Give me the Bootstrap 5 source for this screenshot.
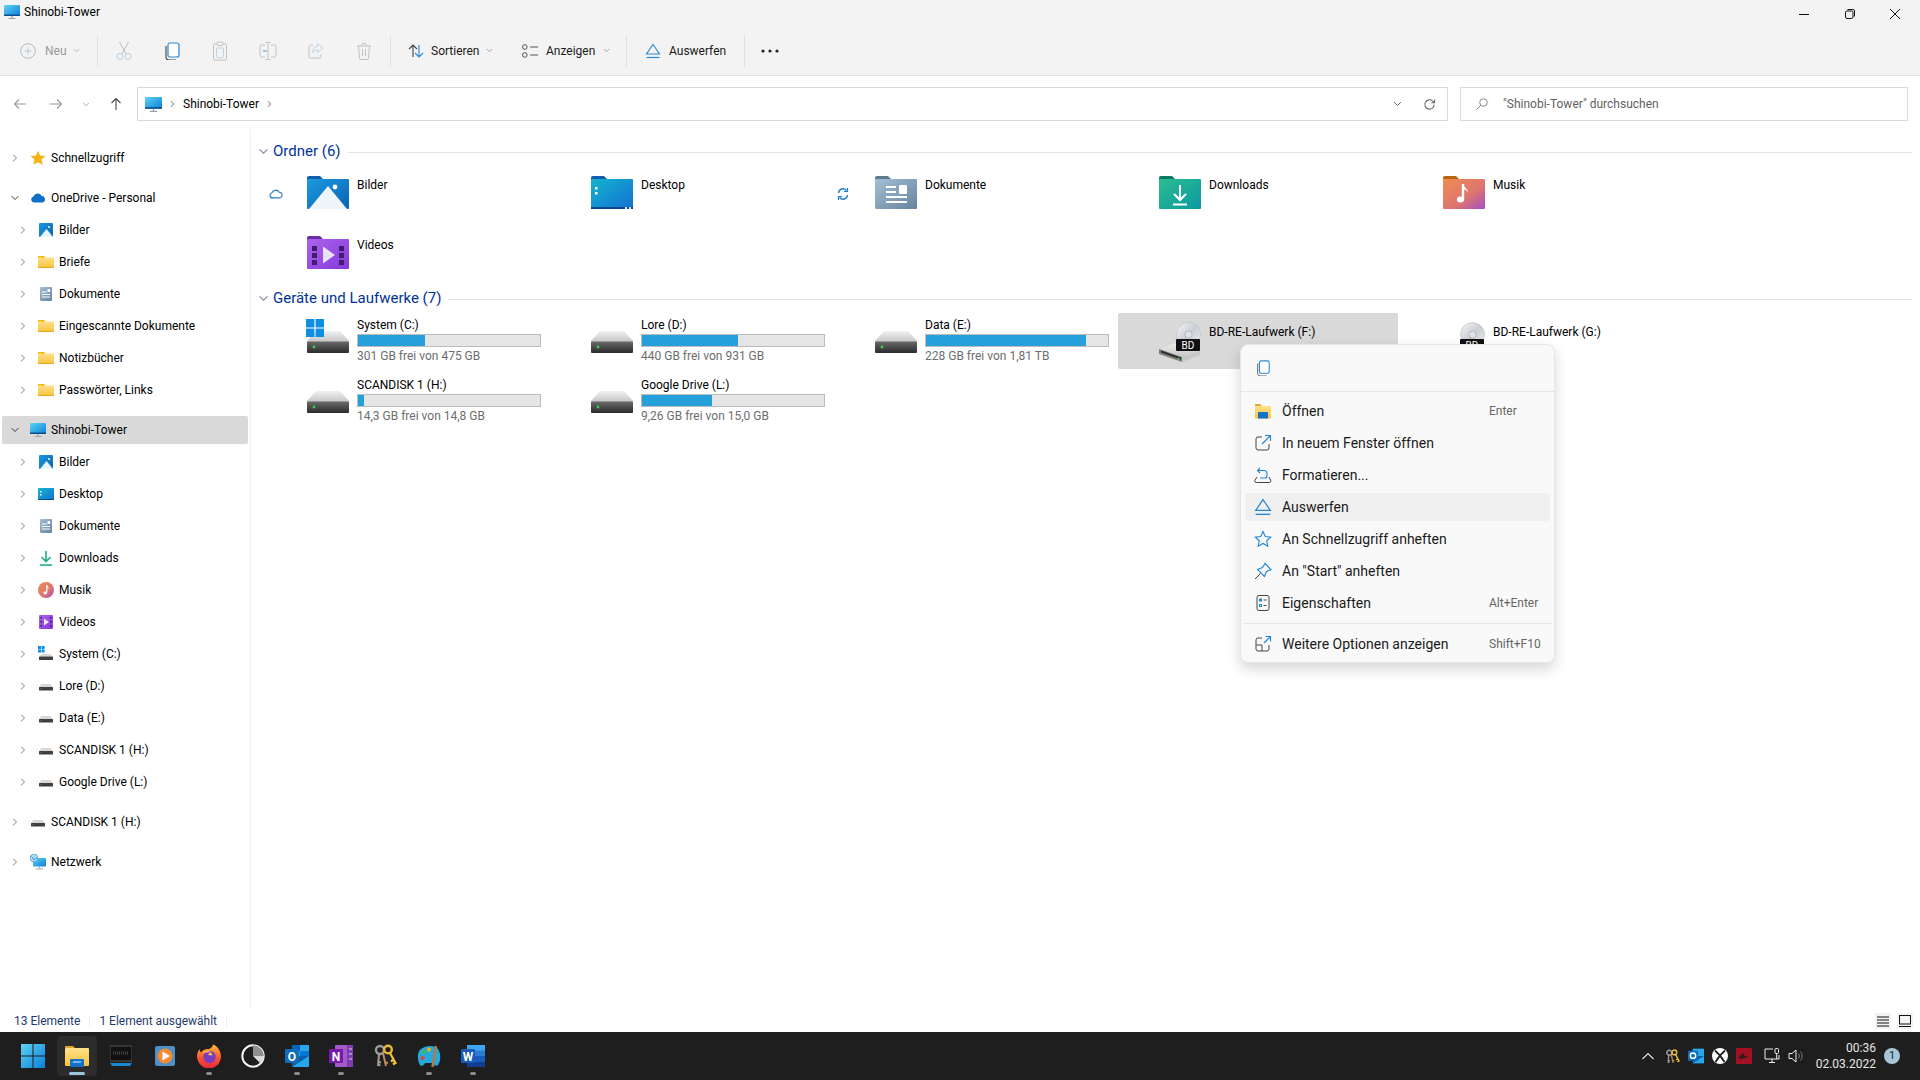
<!DOCTYPE html>
<html lang="de">
<head>
  <meta charset="UTF-8">
  <title>Shinobi-Tower</title>
  <link href="https://cdn.jsdelivr.net/npm/bootstrap@5.3.0/dist/css/bootstrap.min.css" rel="stylesheet">
  <style>
    html, body { height: 100%; }
    body {
      width: 1920px; height: 1080px; overflow: hidden; background: #fff; color: #000;
      font-family: Roboto, "Noto Sans", "Liberation Sans", sans-serif; font-size: 12px; line-height: 16px;
      display: flex; flex-direction: column;
    }
    .svg-defs { position: absolute; width: 0; height: 0; }
    svg { flex: none; display: block; }

    .win-title { height: 32px; background: #f3f3f3; flex: none; padding-right: 2px; }
    .win-title .name { margin-left: 4px; }
    .win-ctl { width: 45.500px; height: 28px; }
    .cmdbar { height: 44px; background: #f3f3f3; border-bottom: 1px solid #e3e3e3; padding-bottom: 6px; flex: none; }
    .cmd-sep { width: 1px; height: 32px; background: #e2e2e2; flex: none; }
    .cmd { height: 32px; border: 0; border-radius: 4px; padding: 0; color: #1a1a1a; font-size: 12px; display: flex; align-items: center; flex: none; }
    .cmd.neu { width: 97px; padding-left: 20px; color: #9a9a9a; gap: 9px; }
    .cmd.neu .chev-d { margin-left: -3px; color: #a8a8a8; }
    .edit-btns { margin-left: 2px; margin-right: 2px; }
    .cmd.ico { width: 48px; justify-content: center; }
    .cmd.sort { width: 114px; margin-left: 9px; padding-left: 8px; gap: 7px; }
    .cmd.view { width: 112px; padding-left: 8px; gap: 8px; }
    .cmd.eject { width: 117px; padding-left: 18px; gap: 8px; }
    .cmd.more { width: 50px; padding-left: 16px; }
    .chev-d { color: #8a8a8a; }

    .addr-row { height: 54px; padding: 11px 12px 9px 0; flex: none; }
    .nav-btns { width: 137px; padding-left: 6px; flex: none; }
    .nav-btn { width: 28px; height: 28px; }
    .nav-hist { margin: 0 12px; color: #9a9a9a; }
    .addr, .search { height: 34px; border: 1px solid #d9d9d9; background: #fff; }
    .addr { flex: 1; padding: 0 11px 0 7px; margin-right: 12px; }
    .addr .crumb { color: #555; }
    .addr .drop { color: #666; }
    .addr .refresh { margin-left: 21px; }
    .search { width: 448px; padding-left: 15px; color: #5f5f5f; gap: 15px; }

    .main { height: 880px; flex: none; }
    .tree { width: 251px; flex: none; border-right: 1px solid #f0f0f0; padding-top: 12px; }
    .tree-group { margin-bottom: 8px; display: flex; flex-direction: column; }
    .tree-row { height: 28px; margin: 2px; border-radius: 2px; flex: none; }
    .tree-row.sel { background: #d9d9d9; }
    .tree-row.l0 { padding-left: 6px; }
    .tree-row.l1 { padding-left: 14px; }
    .tree-row .exp { width: 14px; flex: none; display: flex; justify-content: center; color: #7d7d7d; }
    .tree-row .exp.open { color: #333; }
    .tree-row .ti { margin-left: 8px; margin-right: 5px; }

    .content { flex: 1; padding: 6px 8px 0 15px; }
    .grp-head { height: 30px; color: #003399; font-size: 15px; gap: 4px; margin-left: -8px; }
    .grp-head > svg { color: #7d8ba0; }
    .grp-head .rule { flex: 1; height: 1px; background: #e5e5e5; margin-left: 3px; margin-top: 2px; }
    .tiles { display: grid; grid-template-columns: repeat(5, 280px); grid-auto-rows: 56px; gap: 4px; }
    .tiles + .grp-head { margin-top: 1px; }
    .tile { border-radius: 2px; overflow: hidden; }
    .tile.sel { background: #d9d9d9; }
    .tile .state { width: 37px; flex: none; padding-left: 3px; }
    .tile .meta { margin-left: 6px; margin-top: -1px; width: 186px; }
    .tile .two { height: 32px; margin-top: -2px; }
    .progress.drive { height: 13px; width: 184px; margin: 1px 0; border: 1px solid #bcbcbc; background: #e6e6e6; border-radius: 0; }
    .progress.drive .progress-bar { background: #26a0da; }
    .sub { color: #6d6d6d; }

    .statusbar { height: 22px; color: #1d3a6b; padding: 0 7px 0 14px; flex: none; }
    .statusbar .tick { width: 1px; height: 12px; background: #eee; margin: 0 9px; }
    .view-btn { width: 16px; height: 16px; margin-left: 6px; background: #f3f3f3; }

    .taskbar { height: 48px; background: #1e1e1e; padding-left: 11px; color: #e6e6e6; flex: none; }
    .tb { width: 44px; height: 48px; position: relative; display: flex; align-items: center; justify-content: center; flex: none; }
    .tb.open::before { content: ""; position: absolute; left: 2px; right: 2px; top: 4px; bottom: 4px; background: #2c2c2c; border-radius: 4px; }
    .tb svg { position: relative; }
    .tb.run::after { content: ""; position: absolute; left: 19px; width: 6px; height: 3px; top: 40px; border-radius: 2px; background: #8a8a8a; }
    .tb.open::after { content: ""; position: absolute; left: 14px; width: 16px; height: 3px; top: 40px; border-radius: 2px; background: #9cc3dc; }
    .tray { width: 24px; height: 48px; flex: none; }
    .clock { width: 68px; text-align: right; color: #e6e6e6; flex: none; }
    .badge-note { width: 16px; height: 16px; margin: 0 20px 0 8px; border-radius: 50%; background: #a5c6d8; color: #1e1e1e; font-size: 11px; line-height: 16px; text-align: center; flex: none; }

    .dropdown-menu.ctx {
      left: 1240px; top: 344px; width: 315px; height: 319px; padding: 0; border: 1px solid #e6e6e6; border-radius: 8px;
      background: #f9f9f9; box-shadow: 0 6px 14px rgba(0,0,0,.16); font-size: 14px; line-height: 18px;
    }
    .ctx .top { height: 47px; padding-left: 14px; border-bottom: 1px solid #e5e5e5; }
    .ctx .rows { padding: 3px 0; display: flex; flex-direction: column; }
    .ctx .dropdown-item { height: 28px; margin: 2px 4px; width: auto; padding: 0 6px 0 9px; border-radius: 4px; color: #1a1a1a; display: flex; align-items: center; gap: 10px; background: transparent; flex: none; }
    .ctx .dropdown-item.hover { background: #f0f0f0; }
    .ctx .keys { margin-left: auto; width: 55px; font-size: 12px; color: #666; white-space: nowrap; }
    .ctx .dropdown-divider { margin: 4px 2px; border-top: 1px solid #e5e5e5; opacity: 1; height: 0; flex: none; }
  </style>
</head>
<body>

<svg class="svg-defs" xmlns="http://www.w3.org/2000/svg">
  <defs>
    <linearGradient id="gBlue" x1="0" y1="0" x2="1" y2="1"><stop offset="0" stop-color="#1c9ae0"/><stop offset="1" stop-color="#0a62b4"/></linearGradient>
    <linearGradient id="gCyan" x1="0" y1="0" x2="1" y2="1"><stop offset="0" stop-color="#14b4cf"/><stop offset="1" stop-color="#1470d2"/></linearGradient>
    <linearGradient id="gDocs" x1="0" y1="0" x2="1" y2="1"><stop offset="0" stop-color="#a3bed4"/><stop offset="1" stop-color="#67849f"/></linearGradient>
    <linearGradient id="gTeal" x1="0" y1="0" x2="1" y2="1"><stop offset="0" stop-color="#2cbd8f"/><stop offset="1" stop-color="#0b98a2"/></linearGradient>
    <linearGradient id="gMusic" x1="0" y1="0" x2="1" y2="1"><stop offset="0" stop-color="#f08c52"/><stop offset=".6" stop-color="#dc7570"/><stop offset="1" stop-color="#a44fc8"/></linearGradient>
    <linearGradient id="gVideo" x1="0" y1="0" x2="1" y2="1"><stop offset="0" stop-color="#ab63ea"/><stop offset="1" stop-color="#8638dc"/></linearGradient>
    <linearGradient id="gHddTop" x1="0" y1="0" x2="0" y2="1"><stop offset="0" stop-color="#f2f2f2"/><stop offset="1" stop-color="#c4c4c4"/></linearGradient>
    <linearGradient id="gHddBody" x1="0" y1="0" x2="0" y2="1"><stop offset="0" stop-color="#6a6a6a"/><stop offset="1" stop-color="#2b2b2b"/></linearGradient>
    <linearGradient id="gFolder" x1="0" y1="0" x2="0" y2="1"><stop offset="0" stop-color="#ffe08a"/><stop offset="1" stop-color="#fbc23c"/></linearGradient>
    <linearGradient id="gSky" x1="0" y1="0" x2="1" y2="1"><stop offset="0" stop-color="#5fd3f3"/><stop offset="1" stop-color="#0a7fd8"/></linearGradient>
    <linearGradient id="gDisc" x1="0" y1="0" x2="1" y2="1"><stop offset="0" stop-color="#f7f7f7"/><stop offset=".5" stop-color="#c9ced4"/><stop offset="1" stop-color="#eef0f2"/></linearGradient>
    <linearGradient id="gFox" x1="0" y1="0" x2="0" y2="1"><stop offset="0" stop-color="#ffbd3a"/><stop offset=".55" stop-color="#f6582c"/><stop offset="1" stop-color="#e8283f"/></linearGradient>
  </defs>

  <symbol id="f-pics" viewBox="0 0 48 48">
    <path d="M4 8a2 2 0 0 1 2-2h11l4 4h-17z" fill="#0f5fae"/><rect x="4" y="9" width="42" height="30" rx="1" fill="url(#gBlue)"/>
    <path d="M6 39 25 16 44 39z" fill="#eef6fb"/><circle cx="32" cy="17" r="2.400" fill="#fff"/>
  </symbol>
  <symbol id="f-desk" viewBox="0 0 48 48">
    <path d="M4 8a2 2 0 0 1 2-2h11l4 4h-17z" fill="#0f5fae"/><rect x="4" y="9" width="42" height="30" rx="1" fill="url(#gCyan)"/>
    <rect x="4" y="37" width="42" height="2" fill="#0a4a8c"/><rect x="8" y="17" width="2.500" height="2.500" fill="#fff"/><rect x="8" y="22" width="2.500" height="2.500" fill="#fff"/><rect x="38" y="37" width="2" height="2" fill="#cfe8f5"/><rect x="42" y="37" width="2" height="2" fill="#cfe8f5"/>
  </symbol>
  <symbol id="f-docs" viewBox="0 0 48 48">
    <path d="M4 8a2 2 0 0 1 2-2h11l4 4h-17z" fill="#5e7a90"/><rect x="4" y="9" width="42" height="30" rx="1" fill="url(#gDocs)"/>
    <path d="M15 17h10M15 22h10M15 27h21M15 32h21" stroke="#fff" stroke-width="2"/><rect x="28" y="15" width="8" height="9" rx="1" fill="#fff"/>
  </symbol>
  <symbol id="f-down" viewBox="0 0 48 48">
    <path d="M4 8a2 2 0 0 1 2-2h11l4 4h-17z" fill="#0a7a66"/><rect x="4" y="9" width="42" height="30" rx="1" fill="url(#gTeal)"/>
    <path d="M25 15v15M19 24l6 6 6-6" fill="none" stroke="#fff" stroke-width="2"/><path d="M18 34.500h14" stroke="#fff" stroke-width="2"/>
  </symbol>
  <symbol id="f-music" viewBox="0 0 48 48">
    <path d="M4 8a2 2 0 0 1 2-2h11l4 4h-17z" fill="#b8650f"/><rect x="4" y="9" width="42" height="30" rx="1" fill="url(#gMusic)"/>
    <path d="M24 14v15" stroke="#fff" stroke-width="2.400"/><ellipse cx="21.500" cy="29.500" rx="3.600" ry="3" fill="#fff"/><path d="M24 14c1 4 5 4 5 9-1-3-3-3.500-5-4z" fill="#fff"/>
  </symbol>
  <symbol id="f-video" viewBox="0 0 48 48">
    <path d="M4 8a2 2 0 0 1 2-2h11l4 4h-17z" fill="#6d2fa8"/><rect x="4" y="9" width="42" height="30" rx="1" fill="url(#gVideo)"/>
    <path d="M9 16h5v5H9zM9 23h5v5H9zM9 30h5v5H9zM36 16h5v5h-5zM36 23h5v5h-5zM36 30h5v5h-5z" fill="#3d1d6e"/><path d="M20 16.500 32 25 20 33.500z" fill="#e9e2f6"/>
  </symbol>
  <symbol id="hdd" viewBox="0 0 48 48">
    <path d="M13 14h24l9 10v1H4v-1z" fill="url(#gHddTop)"/><rect x="4" y="24.500" width="42" height="11.500" rx="1" fill="url(#gHddBody)"/><circle cx="11" cy="30" r="1.400" fill="#3ecb50"/>
  </symbol>
  <symbol id="winlogo" viewBox="0 0 48 48">
    <path d="M3 2h8.400v8.400H3zM12.600 2H21v8.400h-8.400zM3 11.600h8.400V20H3zM12.600 11.600H21V20h-8.400z" fill="#0f8fe3"/>
  </symbol>
  <symbol id="bd" viewBox="0 0 48 48">
    <circle cx="33.500" cy="17.500" r="12" fill="url(#gDisc)" stroke="#b9bec4" stroke-width=".6"/><circle cx="33.500" cy="17.500" r="3.600" fill="#dfe2e6" stroke="#9aa0a6" stroke-width=".6"/>
    <path d="M4 32 24 25 45 34 27 40z" fill="url(#gHddTop)"/><path d="M4 32 27 40V45L4 37z" fill="#7d7d7d"/><path d="M6 33.500 26 40.500V42.500L6 35.500z" fill="#2b2b2b"/><path d="M27 40 45 34V38L27 45z" fill="#c6c6c6"/><circle cx="23.500" cy="41.500" r="1" fill="#3ecb50"/>
    <rect x="21" y="22" width="24" height="12" rx="1" fill="#111"/>
  </symbol>

  <symbol id="t-pc" viewBox="0 0 16 16"><rect x="0" y="1" width="16" height="11" rx="1" fill="url(#gSky)"/><rect x="0" y="10.500" width="16" height="1.500" fill="#0b4f8f"/><path d="M8 12v2M4.500 14.500h7" stroke="#9aa3ab" stroke-width="1.200"/></symbol>
  <symbol id="t-pics" viewBox="0 0 16 16"><rect x="1" y="1" width="14" height="14" rx="1" fill="url(#gBlue)"/><path d="M2 15 8.500 7 15 15z" fill="#eaf4fb"/><circle cx="11" cy="5" r="1" fill="#fff"/></symbol>
  <symbol id="t-folder" viewBox="0 0 16 16"><path d="M0 3a1 1 0 0 1 1-1h5l2 2H0z" fill="#f4b400"/><rect y="3.500" width="16" height="10.500" rx=".8" fill="url(#gFolder)"/><rect y="13" width="16" height="1" fill="#e6a323"/></symbol>
  <symbol id="t-docs" viewBox="0 0 16 16"><rect x="2" y="1" width="12" height="14" rx="1" fill="url(#gDocs)"/><path d="M4 6h5M4 8.500h8M4 11h8" stroke="#fff"/><rect x="9.500" y="3" width="2.500" height="3" fill="#fff"/></symbol>
  <symbol id="t-desk" viewBox="0 0 16 16"><rect y="2" width="16" height="12" rx="1" fill="url(#gCyan)"/><rect y="13" width="16" height="1" fill="#0a4a8c"/><rect x="2" y="5" width="1.500" height="1.500" fill="#fff"/><rect x="2" y="8" width="1.500" height="1.500" fill="#fff"/></symbol>
  <symbol id="t-down" viewBox="0 0 16 16"><path d="M8 1v10M3.500 7 8 11.500 12.500 7" fill="none" stroke="#1fae87" stroke-width="1.600"/><path d="M2 15h12" stroke="#1fae87" stroke-width="1.600"/></symbol>
  <symbol id="t-music" viewBox="0 0 16 16"><circle cx="8" cy="8" r="8" fill="url(#gMusic)"/><path d="M8.800 3v7.500" stroke="#fff" stroke-width="1.200"/><ellipse cx="7.200" cy="11" rx="1.800" ry="1.400" fill="#fff"/><path d="M8.800 3c.5 2 2.200 2 2.200 4-.5-1-1.500-1.500-2.200-1.800z" fill="#fff"/></symbol>
  <symbol id="t-video" viewBox="0 0 16 16"><rect x="1" y="1" width="14" height="14" rx="1" fill="url(#gVideo)"/><path d="M2.500 3h1.500v1.500H2.500zM2.500 7h1.500v1.500H2.500zM2.500 11h1.500v1.500H2.500zM12 3h1.500v1.500H12zM12 7h1.500v1.500H12zM12 11h1.500v1.500H12z" fill="#35186b"/><path d="M6 4.500 11 8l-5 3.500z" fill="#f0eaf9"/></symbol>
  <symbol id="t-hdd" viewBox="0 0 16 16"><path d="M3.500 6h9L15 9H1z" fill="#d8d8d8"/><rect x="1" y="9" width="14" height="3.500" rx=".6" fill="#3f3f3f"/><circle cx="3" cy="10.700" r=".5" fill="#3ecb50"/></symbol>
  <symbol id="t-sys" viewBox="0 0 16 16"><path d="M3.500 8h9L15 10.500H1z" fill="#d8d8d8"/><rect x="1" y="10.500" width="14" height="3.500" rx=".6" fill="#3f3f3f"/><path d="M0 0h3v3H0zM3.600 0h3v3h-3zM0 3.600h3v3H0zM3.600 3.600h3v3h-3z" fill="#0f8fe3"/></symbol>
  <symbol id="t-net" viewBox="0 0 16 16"><rect x="3" y="4" width="13" height="8.500" rx="1" fill="url(#gSky)"/><path d="M9.500 12.500v1.500M6 15h7" stroke="#9aa3ab" stroke-width="1.200"/><circle cx="4" cy="4" r="4" fill="#a9daf2" stroke="#2a7fc0" stroke-width=".5"/><path d="M1.500 2.500c1.500 1 1 2.500 2.500 3s1.500-2 3-1.500" fill="none" stroke="#2a8fd0"/></symbol>
  <symbol id="t-cloud" viewBox="0 0 16 16"><path d="M4 12.500a3 3 0 0 1-.6-5.900A4.500 4.500 0 0 1 11.700 6 3.300 3.300 0 0 1 12.500 12.500z" fill="#0f6fc8"/></symbol>
  <symbol id="t-star" viewBox="0 0 16 16"><path d="M8 .8l2.200 4.700 5.200.6-3.800 3.500 1 5.100L8 12.200l-4.600 2.500 1-5.100L.6 6.100l5.200-.6z" fill="#f4b21b"/></symbol>

  <symbol id="ch-r" viewBox="0 0 8 12"><path d="M1.500 1.500 6 6l-4.500 4.500" fill="none" stroke="currentColor" stroke-width="1.300"/></symbol>
  <symbol id="ch-d" viewBox="0 0 12 8"><path d="M1.500 1.500 6 6l4.500-4.500" fill="none" stroke="currentColor" stroke-width="1.300"/></symbol>
  <symbol id="eject" viewBox="0 0 16 16"><path d="M8 1.500 14.500 11h-13z" fill="none" stroke="#2b88d8" stroke-width="1.100"/><path d="M1.500 14.500h13" stroke="#2b88d8" stroke-width="1.200"/></symbol>
  <symbol id="keys" viewBox="0 0 24 24">
    <circle cx="7" cy="6" r="4" fill="none" stroke="#9c9c9c" stroke-width="2.400"/><path d="M6 10 5 22M5 18l3 .5M5 21l2.500 .3" fill="none" stroke="#a8a098" stroke-width="2"/>
    <path d="M10 9 13 22M13 19l2-.5" fill="none" stroke="#c08a62" stroke-width="2"/>
    <circle cx="15" cy="5.500" r="3.800" fill="none" stroke="#e8b93a" stroke-width="2.400"/><path d="M17 9 23 20M20 16l-2 1.500M22 19l-2 1.500" fill="none" stroke="#f0c23c" stroke-width="2.200"/>
  </symbol>
</svg>

<!-- title bar -->
<div class="win-title d-flex align-items-start">
  <svg class="ms-1 mt-1" width="16" height="16"><use href="#t-pc"/></svg>
  <span class="name mt-1">Shinobi-Tower</span>
  <div class="ms-auto d-flex">
    <div class="win-ctl d-flex align-items-center justify-content-center"><svg width="12" height="12"><path d="M1 6.500h10" stroke="#111"/></svg></div>
    <div class="win-ctl d-flex align-items-center justify-content-center"><svg width="12" height="12"><rect x="1.500" y="3" width="7.500" height="7.500" rx="1.500" fill="none" stroke="#111"/><path d="M3.500 1.500h5.500a1.500 1.500 0 0 1 1.500 1.500v5.500" fill="none" stroke="#111"/></svg></div>
    <div class="win-ctl d-flex align-items-center justify-content-center"><svg width="12" height="12"><path d="M1 1l10 10M11 1 1 11" stroke="#111"/></svg></div>
  </div>
</div>

<!-- command bar -->
<div class="cmdbar d-flex align-items-center">
  <button class="btn cmd neu"><svg width="16" height="16"><circle cx="8" cy="8" r="7.300" fill="none" stroke="#b4b9bf"/><path d="M8 4.500v7M4.500 8h7" stroke="#b4c7d6"/></svg><span>Neu</span><svg class="chev-d" width="7" height="5"><use href="#ch-d"/></svg></button>
  <div class="cmd-sep"></div>
  <div class="edit-btns d-flex">
    <button class="btn cmd ico"><svg width="18" height="20" viewBox="0 0 18 20"><path d="M4.500 1 11 13M13.500 1 7 13" stroke="#bdbdbd" fill="none"/><circle cx="5" cy="15.500" r="3" fill="none" stroke="#b6d0e6"/><circle cx="13" cy="15.500" r="3" fill="none" stroke="#b6d0e6"/></svg></button>
    <button class="btn cmd ico"><svg width="16" height="18" viewBox="0 0 16 18"><rect x="4" y="1" width="11" height="14" rx="2" fill="#fff" stroke="#2b88d8" stroke-width="1.200"/><path d="M2 4v11a3 3 0 0 0 3 3h7" fill="none" stroke="#444" stroke-width="1.100"/></svg></button>
    <button class="btn cmd ico"><svg width="16" height="20" viewBox="0 0 16 20"><path d="M5 3H3a1.500 1.500 0 0 0-1.500 1.500v13A1.500 1.500 0 0 0 3 19h10a1.500 1.500 0 0 0 1.500-1.500v-13A1.500 1.500 0 0 0 13 3h-2" fill="none" stroke="#c2c2c2"/><rect x="5" y="1" width="6" height="3.500" rx="1" fill="none" stroke="#c2c2c2"/><rect x="4.500" y="7" width="7" height="9.500" rx="1" fill="none" stroke="#bcd4e8"/></svg></button>
    <button class="btn cmd ico"><svg width="20" height="20" viewBox="0 0 20 20"><path d="M7 4H4a2 2 0 0 0-2 2v8a2 2 0 0 0 2 2h3M13 4h3a2 2 0 0 1 2 2v8a2 2 0 0 1-2 2h-3" fill="none" stroke="#c2c2c2"/><path d="M10 2v16M7.500 1.500h5M7.500 18.500h5" stroke="#c2c2c2"/><path d="M5 10h4" stroke="#9fc4e2" stroke-width="2"/></svg></button>
    <button class="btn cmd ico"><svg width="18" height="18" viewBox="0 0 18 18"><path d="M6 3H3.500A1.500 1.500 0 0 0 2 4.500v10A1.500 1.500 0 0 0 3.500 16h9a1.500 1.500 0 0 0 1.500-1.500V12" fill="none" stroke="#c2c2c2"/><path d="M10.500 1.500 16 6l-5.500 4.500V8C8 8 6.500 9 5.500 11c0-4 2-6.500 5-6.500z" fill="none" stroke="#bcd4e8"/></svg></button>
    <button class="btn cmd ico"><svg width="16" height="18" viewBox="0 0 16 18"><path d="M1 4h14M6 4V2.500A1 1 0 0 1 7 1.500h2a1 1 0 0 1 1 1V4M2.500 4l1 12a1.500 1.500 0 0 0 1.500 1.500h6a1.500 1.500 0 0 0 1.500-1.500l1-12" fill="none" stroke="#c2c2c2"/><path d="M6.500 7v7M9.500 7v7" stroke="#c2c2c2"/></svg></button>
  </div>
  <div class="cmd-sep"></div>
  <button class="btn cmd sort"><svg width="16" height="14" viewBox="0 0 16 14"><path d="M5 13V1M1 5l4-4 4 4" fill="none" stroke="#444" stroke-width="1.100"/><path d="M11 1v12M7 9l4 4 4-4" fill="none" stroke="#2b88d8" stroke-width="1.100"/></svg><span>Sortieren</span><svg class="chev-d" width="7" height="5"><use href="#ch-d"/></svg></button>
  <button class="btn cmd view"><svg width="16" height="14" viewBox="0 0 16 14"><circle cx="2.800" cy="3" r="2.300" fill="none" stroke="#555"/><circle cx="2.800" cy="11" r="2.300" fill="none" stroke="#555"/><path d="M8 3h8M8 11h8" stroke="#555"/></svg><span>Anzeigen</span><svg class="chev-d" width="7" height="5"><use href="#ch-d"/></svg></button>
  <div class="cmd-sep"></div>
  <button class="btn cmd eject"><svg width="16" height="16"><use href="#eject"/></svg><span>Auswerfen</span></button>
  <div class="cmd-sep"></div>
  <button class="btn cmd more"><svg width="18" height="4"><circle cx="2" cy="2" r="1.600" fill="#222"/><circle cx="9" cy="2" r="1.600" fill="#222"/><circle cx="16" cy="2" r="1.600" fill="#222"/></svg></button>
</div>

<!-- address row -->
<div class="addr-row d-flex align-items-center">
  <div class="nav-btns d-flex align-items-center">
    <div class="nav-btn d-flex align-items-center justify-content-center"><svg width="14" height="12"><path d="M13 6H1.500M6 1.500 1.500 6 6 10.500" fill="none" stroke="#9a9a9a" stroke-width="1.100"/></svg></div>
    <div class="nav-btn d-flex align-items-center justify-content-center ms-2"><svg width="14" height="12"><path d="M1 6h11.500M8 1.500 12.500 6 8 10.500" fill="none" stroke="#9a9a9a" stroke-width="1.100"/></svg></div>
    <svg class="nav-hist" width="8" height="5"><use href="#ch-d"/></svg>
    <div class="nav-btn d-flex align-items-center justify-content-center"><svg width="12" height="14"><path d="M6 13V1.500M1.500 6 6 1.500 10.500 6" fill="none" stroke="#444" stroke-width="1.100"/></svg></div>
  </div>
  <div class="addr d-flex align-items-center">
    <svg width="17" height="17"><use href="#t-pc"/></svg>
    <svg class="crumb mx-2" width="5" height="8"><use href="#ch-r"/></svg>
    <span>Shinobi-Tower</span>
    <svg class="crumb ms-2" width="5" height="8"><use href="#ch-r"/></svg>
    <svg class="drop ms-auto" width="9" height="6"><use href="#ch-d"/></svg>
    <svg class="refresh" width="13" height="13" viewBox="0 0 14 14"><path d="M12 7a5 5 0 1 1-1.500-3.600L12.500 5M12.500 1.500V5H9" fill="none" stroke="#666" stroke-width="1.100"/></svg>
  </div>
  <div class="search d-flex align-items-center">
    <svg width="12" height="12"><circle cx="7.500" cy="4.500" r="3.800" fill="none" stroke="#888"/><path d="M4.800 7.200 .5 11.500" stroke="#888"/></svg>
    <span>"Shinobi-Tower" durchsuchen</span>
  </div>
</div>

<div class="main d-flex">
  <!-- navigation tree -->
  <nav class="tree">
    <div class="tree-group">
      <div class="tree-row l0 d-flex align-items-center"><span class="exp"><svg width="6" height="10"><use href="#ch-r"/></svg></span><svg class="ti" width="16" height="16"><use href="#t-star"/></svg>Schnellzugriff</div>
    </div>
    <div class="tree-group">
      <div class="tree-row l0 d-flex align-items-center"><span class="exp open"><svg width="10" height="6"><use href="#ch-d"/></svg></span><svg class="ti" width="16" height="16"><use href="#t-cloud"/></svg>OneDrive - Personal</div>
      <div class="tree-row l1 d-flex align-items-center"><span class="exp"><svg width="6" height="10"><use href="#ch-r"/></svg></span><svg class="ti" width="16" height="16"><use href="#t-pics"/></svg>Bilder</div>
      <div class="tree-row l1 d-flex align-items-center"><span class="exp"><svg width="6" height="10"><use href="#ch-r"/></svg></span><svg class="ti" width="16" height="16"><use href="#t-folder"/></svg>Briefe</div>
      <div class="tree-row l1 d-flex align-items-center"><span class="exp"><svg width="6" height="10"><use href="#ch-r"/></svg></span><svg class="ti" width="16" height="16"><use href="#t-docs"/></svg>Dokumente</div>
      <div class="tree-row l1 d-flex align-items-center"><span class="exp"><svg width="6" height="10"><use href="#ch-r"/></svg></span><svg class="ti" width="16" height="16"><use href="#t-folder"/></svg>Eingescannte Dokumente</div>
      <div class="tree-row l1 d-flex align-items-center"><span class="exp"><svg width="6" height="10"><use href="#ch-r"/></svg></span><svg class="ti" width="16" height="16"><use href="#t-folder"/></svg>Notizbücher</div>
      <div class="tree-row l1 d-flex align-items-center"><span class="exp"><svg width="6" height="10"><use href="#ch-r"/></svg></span><svg class="ti" width="16" height="16"><use href="#t-folder"/></svg>Passwörter, Links</div>
    </div>
    <div class="tree-group">
      <div class="tree-row l0 sel d-flex align-items-center"><span class="exp open"><svg width="10" height="6"><use href="#ch-d"/></svg></span><svg class="ti" width="16" height="16"><use href="#t-pc"/></svg>Shinobi-Tower</div>
      <div class="tree-row l1 d-flex align-items-center"><span class="exp"><svg width="6" height="10"><use href="#ch-r"/></svg></span><svg class="ti" width="16" height="16"><use href="#t-pics"/></svg>Bilder</div>
      <div class="tree-row l1 d-flex align-items-center"><span class="exp"><svg width="6" height="10"><use href="#ch-r"/></svg></span><svg class="ti" width="16" height="16"><use href="#t-desk"/></svg>Desktop</div>
      <div class="tree-row l1 d-flex align-items-center"><span class="exp"><svg width="6" height="10"><use href="#ch-r"/></svg></span><svg class="ti" width="16" height="16"><use href="#t-docs"/></svg>Dokumente</div>
      <div class="tree-row l1 d-flex align-items-center"><span class="exp"><svg width="6" height="10"><use href="#ch-r"/></svg></span><svg class="ti" width="16" height="16"><use href="#t-down"/></svg>Downloads</div>
      <div class="tree-row l1 d-flex align-items-center"><span class="exp"><svg width="6" height="10"><use href="#ch-r"/></svg></span><svg class="ti" width="16" height="16"><use href="#t-music"/></svg>Musik</div>
      <div class="tree-row l1 d-flex align-items-center"><span class="exp"><svg width="6" height="10"><use href="#ch-r"/></svg></span><svg class="ti" width="16" height="16"><use href="#t-video"/></svg>Videos</div>
      <div class="tree-row l1 d-flex align-items-center"><span class="exp"><svg width="6" height="10"><use href="#ch-r"/></svg></span><svg class="ti" width="16" height="16"><use href="#t-sys"/></svg>System (C:)</div>
      <div class="tree-row l1 d-flex align-items-center"><span class="exp"><svg width="6" height="10"><use href="#ch-r"/></svg></span><svg class="ti" width="16" height="16"><use href="#t-hdd"/></svg>Lore (D:)</div>
      <div class="tree-row l1 d-flex align-items-center"><span class="exp"><svg width="6" height="10"><use href="#ch-r"/></svg></span><svg class="ti" width="16" height="16"><use href="#t-hdd"/></svg>Data (E:)</div>
      <div class="tree-row l1 d-flex align-items-center"><span class="exp"><svg width="6" height="10"><use href="#ch-r"/></svg></span><svg class="ti" width="16" height="16"><use href="#t-hdd"/></svg>SCANDISK 1 (H:)</div>
      <div class="tree-row l1 d-flex align-items-center"><span class="exp"><svg width="6" height="10"><use href="#ch-r"/></svg></span><svg class="ti" width="16" height="16"><use href="#t-hdd"/></svg>Google Drive (L:)</div>
    </div>
    <div class="tree-group">
      <div class="tree-row l0 d-flex align-items-center"><span class="exp"><svg width="6" height="10"><use href="#ch-r"/></svg></span><svg class="ti" width="16" height="16"><use href="#t-hdd"/></svg>SCANDISK 1 (H:)</div>
    </div>
    <div class="tree-group">
      <div class="tree-row l0 d-flex align-items-center"><span class="exp"><svg width="6" height="10"><use href="#ch-r"/></svg></span><svg class="ti" width="16" height="16"><use href="#t-net"/></svg>Netzwerk</div>
    </div>
  </nav>

  <!-- folders and drives -->
  <section class="content">
    <div class="grp-head d-flex align-items-center"><svg width="11" height="7"><use href="#ch-d"/></svg><span>Ordner (6)</span><div class="rule"></div></div>
    <div class="tiles">
      <div class="tile d-flex align-items-center"><div class="state"><svg width="14" height="14" viewBox="0 0 16 16"><path d="M4 12.500a3 3 0 0 1-.6-5.900A4.500 4.500 0 0 1 11.700 6 3.300 3.300 0 0 1 12.500 12.500z" fill="none" stroke="#2b7fc8" stroke-width="1.300"/></svg></div><svg width="48" height="48"><use href="#f-pics"/></svg><div class="meta two">Bilder</div></div>
      <div class="tile d-flex align-items-center"><div class="state"></div><svg width="48" height="48"><use href="#f-desk"/></svg><div class="meta two">Desktop</div></div>
      <div class="tile d-flex align-items-center"><div class="state"><svg width="12" height="14" viewBox="0 0 12 14"><path d="M1.500 6a4.500 4.500 0 0 1 8-2.500M10.500 8a4.500 4.500 0 0 1-8 2.500" fill="none" stroke="#1f7fd1" stroke-width="1.400"/><path d="M10.500 1v3.500H7M1.500 13V9.500H5" fill="none" stroke="#1f7fd1" stroke-width="1.200"/></svg></div><svg width="48" height="48"><use href="#f-docs"/></svg><div class="meta two">Dokumente</div></div>
      <div class="tile d-flex align-items-center"><div class="state"></div><svg width="48" height="48"><use href="#f-down"/></svg><div class="meta two">Downloads</div></div>
      <div class="tile d-flex align-items-center"><div class="state"></div><svg width="48" height="48"><use href="#f-music"/></svg><div class="meta two">Musik</div></div>
      <div class="tile d-flex align-items-center"><div class="state"></div><svg width="48" height="48"><use href="#f-video"/></svg><div class="meta two">Videos</div></div>
    </div>
    <div class="grp-head d-flex align-items-center"><svg width="11" height="7"><use href="#ch-d"/></svg><span>Geräte und Laufwerke (7)</span><div class="rule"></div></div>
    <div class="tiles">
      <div class="tile d-flex align-items-center"><div class="state"></div><svg width="48" height="48"><use href="#hdd"/><use href="#winlogo"/></svg><div class="meta">System (C:)<div class="progress drive"><div class="progress-bar" style="width:36.6%"></div></div><div class="sub">301 GB frei von 475 GB</div></div></div>
      <div class="tile d-flex align-items-center"><div class="state"></div><svg width="48" height="48"><use href="#hdd"/></svg><div class="meta">Lore (D:)<div class="progress drive"><div class="progress-bar" style="width:52.7%"></div></div><div class="sub">440 GB frei von 931 GB</div></div></div>
      <div class="tile d-flex align-items-center"><div class="state"></div><svg width="48" height="48"><use href="#hdd"/></svg><div class="meta">Data (E:)<div class="progress drive"><div class="progress-bar" style="width:87.7%"></div></div><div class="sub">228 GB frei von 1,81 TB</div></div></div>
      <div class="tile sel d-flex align-items-center"><div class="state"></div><svg width="48" height="48"><use href="#bd"/><text x="33" y="31.500" text-anchor="middle" font-family="Roboto, sans-serif" font-size="10" fill="#fff">BD</text></svg><div class="meta two">BD-RE-Laufwerk (F:)</div></div>
      <div class="tile d-flex align-items-center"><div class="state"></div><svg width="48" height="48"><use href="#bd"/><text x="33" y="31.500" text-anchor="middle" font-family="Roboto, sans-serif" font-size="10" fill="#fff">BD</text></svg><div class="meta two">BD-RE-Laufwerk (G:)</div></div>
      <div class="tile d-flex align-items-center"><div class="state"></div><svg width="48" height="48"><use href="#hdd"/></svg><div class="meta">SCANDISK 1 (H:)<div class="progress drive"><div class="progress-bar" style="width:3.4%"></div></div><div class="sub">14,3 GB frei von 14,8 GB</div></div></div>
      <div class="tile d-flex align-items-center"><div class="state"></div><svg width="48" height="48"><use href="#hdd"/></svg><div class="meta">Google Drive (L:)<div class="progress drive"><div class="progress-bar" style="width:38.3%"></div></div><div class="sub">9,26 GB frei von 15,0 GB</div></div></div>
    </div>
  </section>
</div>

<!-- status bar -->
<div class="statusbar d-flex align-items-center">
  <span>13 Elemente</span><span class="tick"></span><span>1 Element ausgewählt</span><span class="tick"></span>
  <div class="view-btn ms-auto d-flex align-items-center justify-content-center"><svg width="12" height="11"><path d="M0 1h12M0 4h12M0 7h12M0 10h12" stroke="#111"/></svg></div>
  <div class="view-btn d-flex align-items-center justify-content-center"><svg width="12" height="12"><rect x=".5" y=".5" width="11" height="8.500" fill="none" stroke="#111"/><path d="M0 11.500h12" stroke="#111"/></svg></div>
</div>

<!-- taskbar -->
<div class="taskbar d-flex align-items-center">
  <div class="tb"><svg width="24" height="24"><path d="M0 0h11.500v11.500H0zM12.500 0H24v11.500H12.500zM0 12.500h11.500V24H0zM12.500 12.500H24V24H12.500z" fill="url(#gSky)"/></svg></div>
  <div class="tb open"><svg width="24" height="24"><path d="M0 3a1 1 0 0 1 1-1h7l2 2H0z" fill="#e7a52a"/><rect y="4" width="24" height="18" rx="1" fill="url(#gFolder)"/><rect x="5" y="15" width="14" height="8" rx="1" fill="#1572c9"/><path d="M8 18h8" stroke="#6ab6ee" stroke-width="2"/></svg></div>
  <div class="tb"><svg width="22" height="22"><rect y="1" width="22" height="15" rx="1" fill="#111" stroke="#555"/><path d="M3 8h16" stroke="#444" stroke-dasharray="1 1" stroke-width="3"/><path d="M0 18h22l-2 3H2z" fill="#1a86d0"/></svg></div>
  <div class="tb"><svg width="22" height="22"><rect x="1" y="1" width="20" height="20" rx="2" fill="#4f8fc6"/><circle cx="11" cy="11" r="7.500" fill="#f58b2e"/><path d="M8.500 6.500 16 11l-7.500 4.500z" fill="#fff"/></svg></div>
  <div class="tb run"><svg width="24" height="24"><path d="M16 .5c6 2.500 8 8 8 12a12 12 0 1 1-23.500-3.500C1 7 2 6 2.500 5c0 2 1 3 2 3.500C6 5 10 5 12 5c2-1 4-2 4-4.500z" fill="url(#gFox)"/><circle cx="12.500" cy="13" r="6.200" fill="#7b3cc0"/><path d="M5 9c3-2 6-3 9-1l-3 2.500c1 1 3 1 5 .5-1-1-1.500-1-2-3z" fill="#ffc73d"/></svg></div>
  <div class="tb"><svg width="24" height="24"><circle cx="12" cy="12" r="10.700" fill="#1e1e1e" stroke="#f4f4f4" stroke-width="2"/><path d="M12 12V1.300A10.700 10.700 0 0 1 22.700 12z" fill="#8f8f8f"/><path d="M12 12h10.700A10.700 10.700 0 0 1 19.500 19.500z" fill="#d9d9d9"/></svg></div>
  <div class="tb run"><svg width="24" height="24"><rect x="7" y="1" width="17" height="11" fill="#28a8ea"/><rect x="7" y="1" width="8" height="6" fill="#0364b8"/><rect x="15" y="7" width="9" height="6" fill="#0078d4"/><path d="M7 12h17v10a1 1 0 0 1-1 1H8a1 1 0 0 1-1-1z" fill="#0a5fa8"/><path d="M24 12 7 23h16a1 1 0 0 0 1-1z" fill="#28a8ea"/><rect y="5" width="14" height="14" rx="1" fill="#0f6cbd"/><text x="7" y="16.500" text-anchor="middle" font-family="Roboto, sans-serif" font-weight="700" font-size="12" fill="#fff">O</text></svg></div>
  <div class="tb run"><svg width="24" height="24"><rect x="6" y="1" width="18" height="22" rx="1" fill="#a359c6"/><rect x="18" y="1" width="6" height="22" fill="#7b3db0"/><path d="M20 5h3M20 10h3M20 15h3" stroke="#b783d4" stroke-width="2"/><rect y="5" width="14" height="14" rx="1" fill="#7719aa"/><text x="7" y="16.500" text-anchor="middle" font-family="Roboto, sans-serif" font-weight="700" font-size="12" fill="#fff">N</text></svg></div>
  <div class="tb"><svg width="24" height="24"><use href="#keys"/></svg></div>
  <div class="tb run"><svg width="24" height="24"><path d="M3 21C0 16 0 8 4 5c5-4 14-4 17 0 3 4 3 12 0 16-2 2-4 0-5-2H8c-1 2-3 4-5 2z" fill="#25a8dc"/><circle cx="7" cy="8" r="2" fill="#3dbd5b"/><circle cx="12" cy="5.500" r="2" fill="#f4b400"/><circle cx="5.500" cy="14" r="2" fill="#e2453a"/><path d="M19 2 15.500 23" stroke="#b57a46" stroke-width="2.500"/></svg></div>
  <div class="tb run"><svg width="24" height="24"><rect x="6" y="1" width="18" height="22" rx="1" fill="#2b7cd3"/><rect x="6" y="1" width="18" height="5.500" fill="#41a5ee"/><rect x="6" y="12" width="18" height="6" fill="#185abd"/><rect x="6" y="18" width="18" height="5" fill="#103f91"/><rect y="5" width="14" height="14" rx="1" fill="#185abd"/><text x="7" y="16.500" text-anchor="middle" font-family="Roboto, sans-serif" font-weight="700" font-size="12" fill="#fff">W</text></svg></div>

  <div class="ms-auto tray d-flex align-items-center justify-content-center"><svg width="12" height="8"><path d="M.5 7 6 1.500 11.500 7" fill="none" stroke="#e6e6e6" stroke-width="1.100"/></svg></div>
  <div class="tray d-flex align-items-center justify-content-center"><svg width="15" height="15"><use href="#keys"/></svg></div>
  <div class="tray d-flex align-items-center justify-content-center"><svg width="16" height="16" viewBox="0 0 24 24"><rect x="7" y="1" width="17" height="11" fill="#28a8ea"/><path d="M7 12h17v11H7z" fill="#0a5fa8"/><path d="M24 12 7 23h17z" fill="#28a8ea"/><rect y="4" width="15" height="15" rx="1" fill="#0f6cbd"/><circle cx="7.500" cy="11.500" r="4" fill="none" stroke="#fff" stroke-width="2.200"/></svg></div>
  <div class="tray d-flex align-items-center justify-content-center"><svg width="16" height="16" viewBox="0 0 16 16"><circle cx="8" cy="8" r="8" fill="#fff"/><path d="M3 2.500C6 5 10 9.500 12.500 14M13 2.500C10 5 6 9.500 3.500 14" fill="none" stroke="#1e1e1e" stroke-width="1.800"/></svg></div>
  <div class="tray me-1 d-flex align-items-center justify-content-center"><svg width="16" height="16"><rect width="16" height="16" fill="#a30f23"/><path d="M2 10 7 5l2 3 4 1-5 1-3 1z" fill="#2a1c1c"/></svg></div>
  <div class="tray d-flex align-items-center justify-content-center"><svg width="16" height="16"><path d="M9 1H1v10h14V7M5 14.500h6M8 11v3.500" fill="none" stroke="#eee"/><rect x="11" y=".5" width="3.500" height="5" rx="1" fill="none" stroke="#eee"/><path d="M12.700 5.500v5.500" stroke="#eee"/></svg></div>
  <div class="tray d-flex align-items-center justify-content-center"><svg width="16" height="16"><path d="M1 5.500h3L8 2v12L4 10.500H1z" fill="none" stroke="#eee"/><path d="M10.500 5.500a4 4 0 0 1 0 5M12.500 3.500a7 7 0 0 1 0 9" fill="none" stroke="#777"/></svg></div>
  <div class="clock">00:36<br>02.03.2022</div>
  <div class="badge-note">1</div>
</div>

<!-- context menu -->
<div class="dropdown-menu show ctx">
  <div class="top d-flex align-items-center"><svg width="16" height="16" viewBox="0 0 16 18"><rect x="4" y="1" width="11" height="14" rx="2" fill="#fff" stroke="#2b88d8" stroke-width="1.200"/><path d="M2 4v11a3 3 0 0 0 3 3h7" fill="none" stroke="#666" stroke-width="1.100"/></svg></div>
  <div class="rows">
    <a class="dropdown-item" href="#"><svg width="18" height="18"><path d="M1 3a1 1 0 0 1 1-1h4l2 2H1z" fill="#e7a52a"/><rect x="1" y="4" width="16" height="12.500" rx=".6" fill="url(#gFolder)"/><rect x="4" y="10" width="10" height="6.500" rx=".6" fill="#1572c9"/></svg>Öffnen<span class="keys">Enter</span></a>
    <a class="dropdown-item" href="#"><svg width="18" height="18"><path d="M8 3H4a2 2 0 0 0-2 2v9a2 2 0 0 0 2 2h9a2 2 0 0 0 2-2v-4" fill="none" stroke="#444"/><path d="M8 10 16 2M11 1.500h5.500V7" fill="none" stroke="#1f84d8" stroke-width="1.100"/></svg>In neuem Fenster öffnen<span class="keys"></span></a>
    <a class="dropdown-item" href="#"><svg width="18" height="18"><path d="M3 11 .8 14.500V15a1.500 1.500 0 0 0 1.500 1.500h13a1.500 1.500 0 0 0 1.500-1.500v-.5L15 11" fill="none" stroke="#444"/><path d="M3.500 4.500H10a3 3 0 0 1 3 3V10a2 2 0 0 1-2 2H6" fill="none" stroke="#1f84d8" stroke-width="1.100"/><path d="M6 2 3.500 4.500 6 7" fill="none" stroke="#1f84d8" stroke-width="1.100"/></svg>Formatieren...<span class="keys"></span></a>
    <a class="dropdown-item hover" href="#"><svg width="18" height="18" viewBox="0 0 16 16"><use href="#eject"/></svg>Auswerfen<span class="keys"></span></a>
    <a class="dropdown-item" href="#"><svg width="18" height="18"><path d="M9 1.500l2.300 5 5.400.6-4 3.700 1.100 5.400L9 13.500l-4.800 2.700 1.100-5.400-4-3.700 5.400-.6z" fill="none" stroke="#1f84d8" stroke-width="1.100"/></svg>An Schnellzugriff anheften<span class="keys"></span></a>
    <a class="dropdown-item" href="#"><svg width="18" height="18"><path d="M11 1.500 17 7.500l-4.500 2-2 5L3.500 7.500l5-2z" fill="none" stroke="#1f84d8" stroke-width="1.100"/><path d="M6.500 11.500 1 17" stroke="#444"/></svg>An "Start" anheften<span class="keys"></span></a>
    <a class="dropdown-item" href="#"><svg width="18" height="18"><rect x="3" y="1.500" width="12" height="15" rx="2" fill="none" stroke="#444"/><rect x="5.500" y="5" width="2" height="2" fill="none" stroke="#1f84d8"/><rect x="5.500" y="10.500" width="2" height="2" fill="none" stroke="#1f84d8"/><path d="M9.500 6h3M9.500 11.500h3" stroke="#444"/></svg>Eigenschaften<span class="keys">Alt+Enter</span></a>
    <hr class="dropdown-divider">
    <a class="dropdown-item" href="#"><svg width="18" height="18"><path d="M8 3H4a2 2 0 0 0-2 2v9a2 2 0 0 0 2 2h9a2 2 0 0 0 2-2v-4" fill="none" stroke="#444"/><path d="M2.500 10H8v6" fill="none" stroke="#444"/><path d="M10 8 16 2M11.500 1.500h5V6.500" fill="none" stroke="#1f84d8" stroke-width="1.100"/></svg>Weitere Optionen anzeigen<span class="keys">Shift+F10</span></a>
  </div>
</div>

<script src="https://cdn.jsdelivr.net/npm/bootstrap@5.3.0/dist/js/bootstrap.bundle.min.js"></script>
</body>
</html>
